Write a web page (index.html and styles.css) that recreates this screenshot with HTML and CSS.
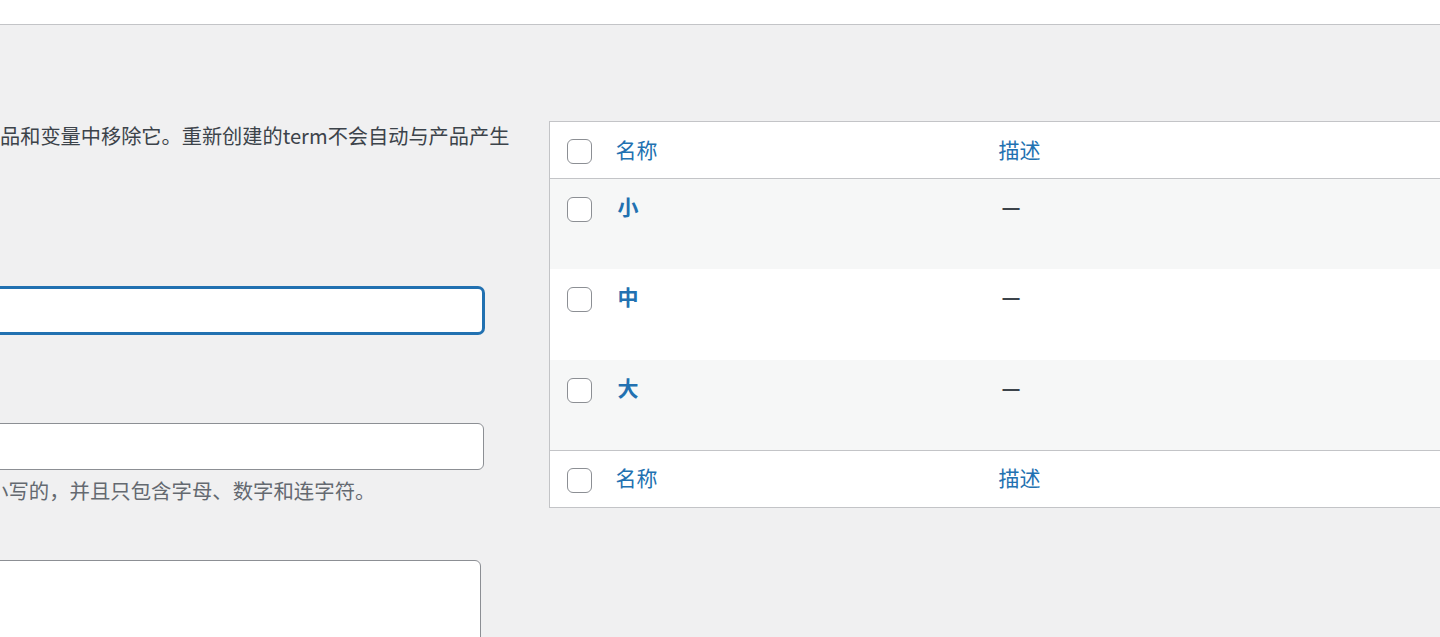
FILE: index.html
```html
<html lang="zh-CN">
<head>
<meta charset="utf-8">
<title>属性项</title>
<link rel="stylesheet" href="styles.css">
</head>
<body>
  <div class="topbar"></div>

  <div class="wrap">
    <div class="col-left">
      <p class="note">品和变量中移除它。重新创建的term不会自动与产品产生</p>

      <div class="form-field field-name">
        <input class="text-input focused" type="text" value="">
      </div>

      <div class="form-field field-slug">
        <input class="text-input" type="text" value="">
        <p class="help">小写的，并且只包含字母、数字和连字符。</p>
      </div>

      <div class="form-field field-desc">
        <textarea class="text-area"></textarea>
      </div>
    </div>

    <div class="col-right">
      <table class="terms">
        <colgroup>
          <col class="c-check">
          <col class="c-name">
          <col class="c-desc">
        </colgroup>
        <thead>
          <tr>
            <th class="check"><input type="checkbox" class="cb"></th>
            <th class="name"><a href="#">名称</a></th>
            <th class="desc"><a href="#">描述</a></th>
          </tr>
        </thead>
        <tbody>
          <tr class="alt">
            <td class="check"><input type="checkbox" class="cb"></td>
            <td class="name"><a href="#" class="term">小</a></td>
            <td class="desc"><span class="dash">—</span></td>
          </tr>
          <tr>
            <td class="check"><input type="checkbox" class="cb"></td>
            <td class="name"><a href="#" class="term">中</a></td>
            <td class="desc"><span class="dash">—</span></td>
          </tr>
          <tr class="alt">
            <td class="check"><input type="checkbox" class="cb"></td>
            <td class="name"><a href="#" class="term">大</a></td>
            <td class="desc"><span class="dash">—</span></td>
          </tr>
        </tbody>
        <tfoot>
          <tr>
            <th class="check"><input type="checkbox" class="cb"></th>
            <th class="name"><a href="#">名称</a></th>
            <th class="desc"><a href="#">描述</a></th>
          </tr>
        </tfoot>
      </table>
    </div>
  </div>
</body>
</html>
```

FILE: styles.css
```css
html, body {
  margin: 0;
  padding: 0;
  overflow: hidden;
}

body {
  background: #f0f0f1;
  color: #3c434a;
  font-family: "Noto Sans CJK SC", "Noto Sans", sans-serif;
  font-size: 21px;
  height: 637px;
}

a {
  color: #2271b1;
  text-decoration: none;
}

.topbar {
  height: 24px;
  background: #fff;
  border-bottom: 1px solid #c3c4c7;
}

.wrap {
  display: flex;
  align-items: flex-start;
}

/* left form column */
.col-left {
  width: 510px;
  flex: none;
}

.note {
  margin: 96px 0 0 0;
  font-size: 20.2px;
  line-height: 30px;
  white-space: nowrap;
}

.form-field {
  margin-left: -20px;
}

.field-name {
  margin-top: 136px;
}

.field-slug {
  margin-top: 89px;
}

.field-desc {
  margin-top: 56px;
}

.text-input {
  display: block;
  box-sizing: border-box;
  width: 504px;
  height: 47px;
  margin: 0;
  border: 1px solid #8c8f94;
  border-radius: 6px;
  background: #fff;
  outline: none;
}

.text-input.focused {
  border: 2px solid #2271b1;
  box-shadow: 0 0 0 1px #2271b1;
}

.help {
  margin: 6px 0 0 8px;
  font-size: 20.4px;
  line-height: 28px;
  color: #646970;
  white-space: nowrap;
}

.text-area {
  display: block;
  box-sizing: border-box;
  width: 501px;
  height: 160px;
  margin: 0;
  border: 1px solid #8c8f94;
  border-radius: 6px;
  background: #fff;
  resize: none;
}

/* right table column */
.col-right {
  margin-left: 39px;
  padding-top: 96px;
  flex: none;
}

.terms {
  width: 1100px;
  table-layout: fixed;
  border-collapse: collapse;
  border: 1px solid #c3c4c7;
  background: #fff;
  font-size: 21px;
  color: #3c434a;
}

.c-check { width: 52px; }
.c-name { width: 382px; }

.terms th,
.terms td {
  text-align: left;
  font-weight: normal;
  padding: 0;
  line-height: 30px;
}

.terms thead th,
.terms tfoot th {
  height: 57px;
  box-sizing: border-box;
  vertical-align: middle;
}

.terms thead tr {
  border-bottom: 1px solid #c3c4c7;
}

.terms tfoot tr {
  border-top: 1px solid #c3c4c7;
}

.terms th.check {
  padding: 3px 0 0 17px;
}

.terms th.name { padding: 0 0 3px 14px; }
.terms th.desc { padding: 0 0 3px 15px; }

.terms td {
  vertical-align: top;
  height: 90.67px;
  box-sizing: border-box;
}

.terms td.check {
  padding: 18px 0 0 17px;
}

.terms td.name {
  padding: 12px 0 0 14px;
}

.terms td.desc {
  padding: 12px 0 0 15px;
}

tr.alt {
  background: #f6f7f7;
}

.term {
  font-weight: 600;
  padding-left: 2px;
}

.dash {
  color: #3c434a;
  font-weight: 700;
  display: inline-block;
  padding-left: 3px;
}

.cb {
  appearance: none;
  -webkit-appearance: none;
  display: block;
  width: 25px;
  height: 25px;
  margin: 0;
  border: 1px solid #8c8f94;
  border-radius: 6px;
  background: #fff;
}
```
